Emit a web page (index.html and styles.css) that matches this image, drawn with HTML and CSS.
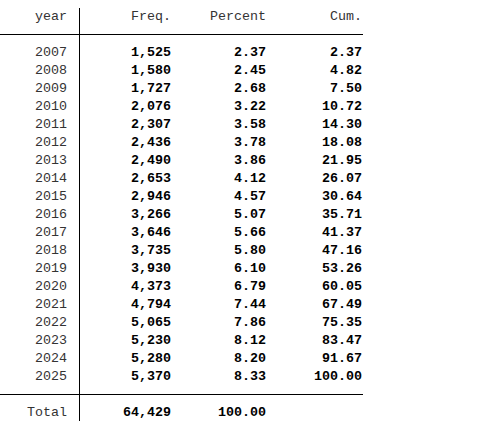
FILE: index.html
```html
<!DOCTYPE html>
<html lang="en">
<head>
    <meta charset="UTF-8">
    <title>tab year</title>
    <link rel="stylesheet" href="styles.css">
</head>
<body>
    <div class="tab">
        <div class="head">
            <div class="row">
                <span class="lbl">year</span>
                <span class="lbl">Freq.</span>
                <span class="lbl">Percent</span>
                <span class="lbl">Cum.</span>
            </div>
        </div>
        <div class="body" id="rows"></div>
        <div class="foot">
            <div class="row">
                <span class="lbl">Total</span>
                <span class="num">64,429</span>
                <span class="num">100.00</span>
                <span></span>
            </div>
        </div>
    </div>
    <script>
        const data = [
            [2007, '1,525', '2.37', '2.37'],
            [2008, '1,580', '2.45', '4.82'],
            [2009, '1,727', '2.68', '7.50'],
            [2010, '2,076', '3.22', '10.72'],
            [2011, '2,307', '3.58', '14.30'],
            [2012, '2,436', '3.78', '18.08'],
            [2013, '2,490', '3.86', '21.95'],
            [2014, '2,653', '4.12', '26.07'],
            [2015, '2,946', '4.57', '30.64'],
            [2016, '3,266', '5.07', '35.71'],
            [2017, '3,646', '5.66', '41.37'],
            [2018, '3,735', '5.80', '47.16'],
            [2019, '3,930', '6.10', '53.26'],
            [2020, '4,373', '6.79', '60.05'],
            [2021, '4,794', '7.44', '67.49'],
            [2022, '5,065', '7.86', '75.35'],
            [2023, '5,230', '8.12', '83.47'],
            [2024, '5,280', '8.20', '91.67'],
            [2025, '5,370', '8.33', '100.00']
        ];
        const rows = document.getElementById('rows');
        data.forEach(d => {
            const row = document.createElement('div');
            row.className = 'row';
            row.innerHTML = '<span class="lbl">' + d[0] + '</span>' +
                '<span class="num">' + d[1] + '</span>' +
                '<span class="num">' + d[2] + '</span>' +
                '<span class="num">' + d[3] + '</span>';
            rows.appendChild(row);
        });
    </script>
</body>
</html>
```

FILE: styles.css
```css
body {
    margin: 0;
    background-color: #fff;
    font-family: "Liberation Mono", "Courier New", monospace;
    font-size: 13.33px;
}
.tab {
    width: 363px;
    margin-top: 8px;
    background: linear-gradient(#000, #000) 79px 0 / 1px 100% no-repeat;
}
.row {
    display: grid;
    grid-template-columns: 67px 104px 95px 96px;
    height: 18px;
    line-height: 20px;
}
.row span {
    text-align: right;
    white-space: pre;
}
.lbl {
    color: #333;
}
.num {
    color: #000;
    font-weight: bold;
}
.head {
    padding-bottom: 9px;
}
.head .row {
    height: 17px;
    line-height: 18px;
}
.body {
    border-top: 1px solid #000;
    padding: 8px 0 9px;
}
.foot {
    border-top: 1px solid #000;
    padding-top: 8px;
}
```
